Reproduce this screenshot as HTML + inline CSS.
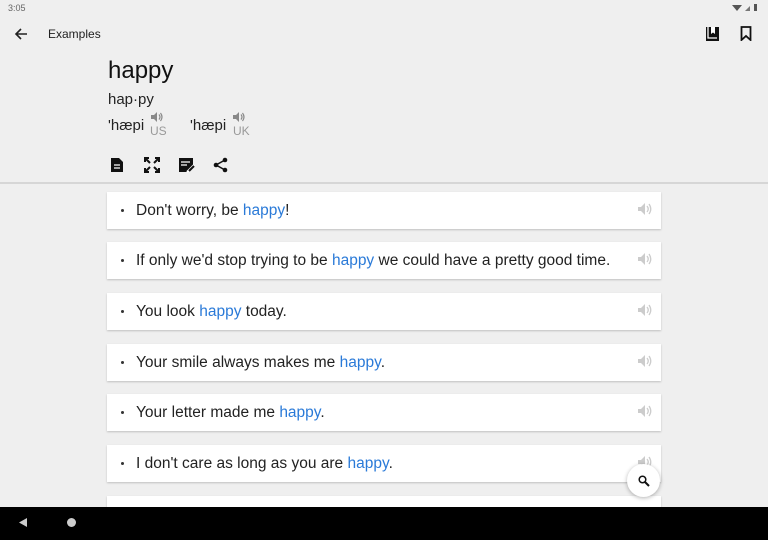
<!DOCTYPE html>
<html><head><style>
*{margin:0;padding:0;box-sizing:border-box}
body{width:768px;height:540px;overflow:hidden;background:#efefef;font-family:"Liberation Sans",sans-serif;position:relative;color:#212121}
.a{position:absolute}
.card{position:absolute;left:107px;width:554px;height:37px;background:#fff;box-shadow:0 1px 2px rgba(0,0,0,.2);font-size:15.5px;line-height:37px;padding-left:29px;color:#222}
.card:before{content:"";position:absolute;left:14px;top:17px;width:3px;height:3px;border-radius:50%;background:#333}
.card b{font-weight:normal;color:#2a7ad8}
.card svg{position:absolute;right:8px;top:10px}
</style></head><body>
<div class="a" style="left:8px;top:3px;font-size:9px;color:#666">3:05</div>
<svg class="a" style="left:732px;top:3px" width="30" height="9"><path d="M0 2 L10 2 L5 8Z" fill="#555"/><path d="M13 8 L18 3 L18 8Z" fill="#777"/><rect x="22" y="1" width="3" height="7" fill="#555"/></svg>
<svg class="a" style="left:14px;top:27px" width="14" height="14" viewBox="0 0 14 14"><path d="M13 7H2M7 2L2 7L7 12" stroke="#222" stroke-width="1.6" fill="none"/></svg>
<div class="a" style="left:48px;top:27px;font-size:12px;color:#222">Examples</div>
<svg class="a" style="left:705px;top:26px" width="15" height="16"><path d="M1 1H14V15H1Z" fill="#111"/><path d="M3 1V12H12" stroke="#fff" stroke-width="1.3" fill="none"/><path d="M6 1V8L8 6.5L10 8V1" fill="#fff"/></svg>
<svg class="a" style="left:740px;top:26px" width="12" height="15"><path d="M1.5 1H10.5V14L6 10L1.5 14Z" stroke="#111" stroke-width="1.8" fill="none"/></svg>
<div class="a" style="left:108px;top:57px;font-size:24px;color:#111">happy</div>
<div class="a" style="left:108px;top:91px;font-size:15px;color:#222">hap·py</div>
<div class="a" style="left:108px;top:117px;font-size:15px;color:#222">'hæpi</div>
<div class="a" style="left:150px;top:124px;font-size:12px;color:#999">US</div>
<div class="a" style="left:190px;top:117px;font-size:15px;color:#222">'hæpi</div>
<div class="a" style="left:233px;top:124px;font-size:12px;color:#999">UK</div>
<svg class="a" style="left:150px;top:111px" width="13" height="12"><path d="M1 4H4L7 1V11L4 8H1Z" fill="#888"/><path d="M9 3.5Q11 6 9 8.5M10.5 2Q13.5 6 10.5 10" stroke="#888" stroke-width="1.2" fill="none"/></svg>
<svg class="a" style="left:232px;top:111px" width="13" height="12"><path d="M1 4H4L7 1V11L4 8H1Z" fill="#888"/><path d="M9 3.5Q11 6 9 8.5M10.5 2Q13.5 6 10.5 10" stroke="#888" stroke-width="1.2" fill="none"/></svg>
<svg class="a" style="left:110px;top:157px" width="14" height="16"><path d="M1 1H9L13 5V15H1Z" fill="#111"/><path d="M4 8H10M4 11H10" stroke="#fff" stroke-width="1.3"/></svg>
<svg class="a" style="left:144px;top:157px" width="16" height="16"><path d="M1 5V1H5M11 1H15V5M15 11V15H11M5 15H1V11M2 2L6 6M14 2L10 6M14 14L10 10M2 14L6 10" stroke="#111" stroke-width="2" fill="none"/></svg>
<svg class="a" style="left:178px;top:157px" width="17" height="16"><path d="M1 1H15V8L9 15H1Z" fill="#111"/><path d="M3 5H12M3 8H9" stroke="#fff" stroke-width="1.3"/><path d="M9 15L16 8" stroke="#fff" stroke-width="2"/><path d="M11 14L16 9" stroke="#111" stroke-width="2"/></svg>
<svg class="a" style="left:213px;top:157px" width="15" height="16"><circle cx="12" cy="3" r="2.3" fill="#111"/><circle cx="3" cy="8" r="2.3" fill="#111"/><circle cx="12" cy="13" r="2.3" fill="#111"/><path d="M12 3L3 8L12 13" stroke="#111" stroke-width="1.5" fill="none"/></svg>
<div class="a" style="left:0;top:182px;width:768px;height:2px;background:#d6d6d6"></div>
<div class="card" style="top:192px">Don't worry, be <b>happy</b>!<svg width="16" height="14"><path d="M1 5H4L8 1V13L4 9H1Z" fill="#ccc"/><path d="M10 4Q12.5 7 10 10M12 2Q15.5 7 12 12" stroke="#ccc" stroke-width="1.3" fill="none"/></svg></div>
<div class="card" style="top:242px">If only we'd stop trying to be <b>happy</b> we could have a pretty good time.<svg width="16" height="14"><path d="M1 5H4L8 1V13L4 9H1Z" fill="#ccc"/><path d="M10 4Q12.5 7 10 10M12 2Q15.5 7 12 12" stroke="#ccc" stroke-width="1.3" fill="none"/></svg></div>
<div class="card" style="top:293px">You look <b>happy</b> today.<svg width="16" height="14"><path d="M1 5H4L8 1V13L4 9H1Z" fill="#ccc"/><path d="M10 4Q12.5 7 10 10M12 2Q15.5 7 12 12" stroke="#ccc" stroke-width="1.3" fill="none"/></svg></div>
<div class="card" style="top:344px">Your smile always makes me <b>happy</b>.<svg width="16" height="14"><path d="M1 5H4L8 1V13L4 9H1Z" fill="#ccc"/><path d="M10 4Q12.5 7 10 10M12 2Q15.5 7 12 12" stroke="#ccc" stroke-width="1.3" fill="none"/></svg></div>
<div class="card" style="top:394px">Your letter made me <b>happy</b>.<svg width="16" height="14"><path d="M1 5H4L8 1V13L4 9H1Z" fill="#ccc"/><path d="M10 4Q12.5 7 10 10M12 2Q15.5 7 12 12" stroke="#ccc" stroke-width="1.3" fill="none"/></svg></div>
<div class="card" style="top:445px">I don't care as long as you are <b>happy</b>.<svg width="16" height="14"><path d="M1 5H4L8 1V13L4 9H1Z" fill="#ccc"/><path d="M10 4Q12.5 7 10 10M12 2Q15.5 7 12 12" stroke="#ccc" stroke-width="1.3" fill="none"/></svg></div>
<div class="card" style="top:496px"></div>
<div class="a" style="left:627px;top:464px;width:33px;height:33px;border-radius:50%;background:#fff;box-shadow:0 1px 4px rgba(0,0,0,.3)"></div>
<svg class="a" style="left:638px;top:475px" width="12" height="12"><circle cx="4.5" cy="4.5" r="3.3" stroke="#111" stroke-width="1.5" fill="none"/><path d="M7 7L11 11" stroke="#111" stroke-width="2"/></svg>
<div class="a" style="left:0;top:507px;width:768px;height:33px;background:#000"></div>
<svg class="a" style="left:18px;top:517px" width="10" height="11"><path d="M9 1V10L1 5.5Z" fill="#ccc"/></svg>
<div class="a" style="left:67px;top:518px;width:9px;height:9px;border-radius:50%;background:#ccc"></div>
</body></html>
